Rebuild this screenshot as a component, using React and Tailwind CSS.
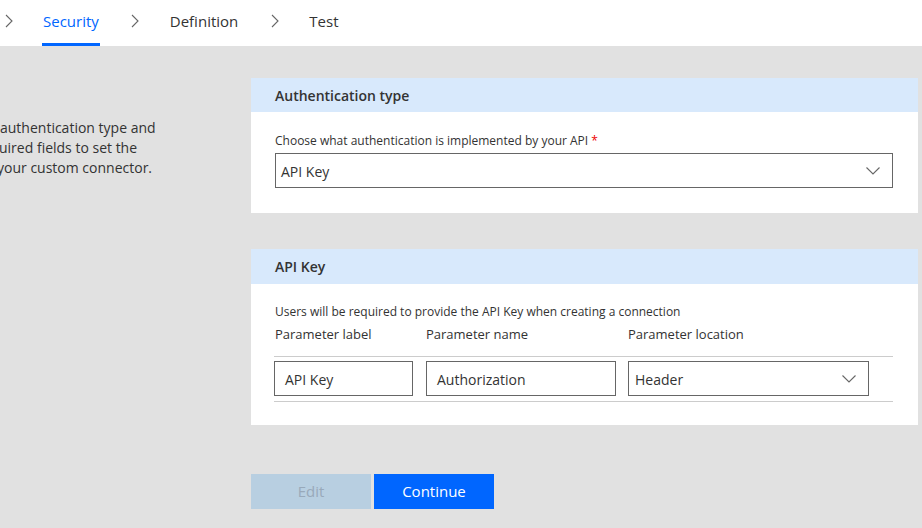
import React from "react";

const Chevron = ({ className = "" }) => (
  <svg width="8" height="14" viewBox="0 0 8 14" className={className} fill="none">
    <path d="M1 1l6 6-6 6" stroke="#666" strokeWidth="1.1" />
  </svg>
);

const Down = () => (
  <svg width="14" height="8" viewBox="0 0 14 8" fill="none">
    <path d="M0.5 0.5l6.5 6.5 6.5-6.5" stroke="#666" strokeWidth="1.1" />
  </svg>
);

export default function App() {
  return (
    <div className="w-[922px] h-[528px] overflow-hidden flex flex-col text-[#333]" style={{ fontFamily: '"Open Sans", "Noto Sans", sans-serif' }}>
      <div className="h-[46px] bg-white flex items-stretch shrink-0">
        <div className="flex items-center pl-[5px] pb-[4px]"><Chevron /></div>
        <div className="ml-[29px] flex items-center border-b-[3px] border-[#0066ff] pb-[1px] px-[1px] text-[15px] text-[#0066ff]">Security</div>
        <div className="ml-[31px] flex items-center pb-[4px]"><Chevron /></div>
        <div className="ml-[31px] flex items-center pb-[4px] text-[15px]">Definition</div>
        <div className="ml-[33px] flex items-center pb-[4px]"><Chevron /></div>
        <div className="ml-[30px] flex items-center pb-[4px] text-[15px]">Test</div>
      </div>
      <div className="flex-1 bg-[#e1e1e1] flex">
        <div className="w-[251px] shrink-0 pt-[72px] text-[14px] leading-[20px] overflow-hidden whitespace-nowrap">
          <div className="ml-[0px]">authentication type and</div>
          <div className="ml-[-1px]">uired fields to set the</div>
          <div className="ml-[-3px]">your custom connector.</div>
        </div>
        <div className="w-[667px] pt-[32px] flex flex-col">
          <div className="bg-white">
            <div className="h-[34px] bg-[#d8e9fc] px-[24px] flex items-center text-[14px] font-semibold">Authentication type</div>
            <div className="px-[24px] pt-[21px] pb-[25px]">
              <div className="text-[12px] leading-[16px]">Choose what authentication is implemented by your API <span className="text-[#e00]">*</span></div>
              <div className="mt-[4px] h-[35px] w-[618px] border border-[#666] flex items-center justify-between pl-[5px] pr-[12px] text-[14px]">
                <span className="pt-[1px]">API Key</span>
                <Down />
              </div>
            </div>
          </div>
          <div className="bg-white mt-[36px]">
            <div className="h-[35px] bg-[#d8e9fc] px-[24px] flex items-center text-[14px] font-semibold">API Key</div>
            <div className="pl-[23px] pr-[25px] pt-[20px] pb-[23px]">
              <div className="pl-[1px] text-[12px] leading-[16px]">Users will be required to provide the API Key when creating a connection</div>
              <div className="mt-[5px] flex text-[13px] leading-[18px]">
                <div className="w-[139px] pl-[1px]">Parameter label</div>
                <div className="ml-[13px] w-[190px]">Parameter name</div>
                <div className="ml-[12px] w-[241px]">Parameter location</div>
              </div>
              <div className="mt-[13px] border-t border-[#ccc] w-[619px]" />
              <div className="mt-[4px] flex text-[14px]">
                <div className="w-[139px] h-[35px] border border-[#666] flex items-center pl-[10px] pt-[1px]">API Key</div>
                <div className="ml-[13px] w-[190px] h-[35px] border border-[#666] flex items-center pl-[10px] pt-[1px]">Authorization</div>
                <div className="ml-[12px] w-[241px] h-[35px] border border-[#666] flex items-center justify-between pl-[6px] pr-[12px]">
                  <span className="pt-[1px]">Header</span>
                  <Down />
                </div>
              </div>
              <div className="mt-[5px] border-t border-[#ccc] w-[619px]" />
            </div>
          </div>
          <div className="mt-[49px] flex gap-[3px]">
            <div className="w-[120px] h-[35px] bg-[#b8cfe1] text-[#98a9ba] flex items-center justify-center text-[15px]">Edit</div>
            <div className="w-[120px] h-[35px] bg-[#0066ff] text-white flex items-center justify-center text-[15px]">Continue</div>
          </div>
        </div>
      </div>
    </div>
  );
}
